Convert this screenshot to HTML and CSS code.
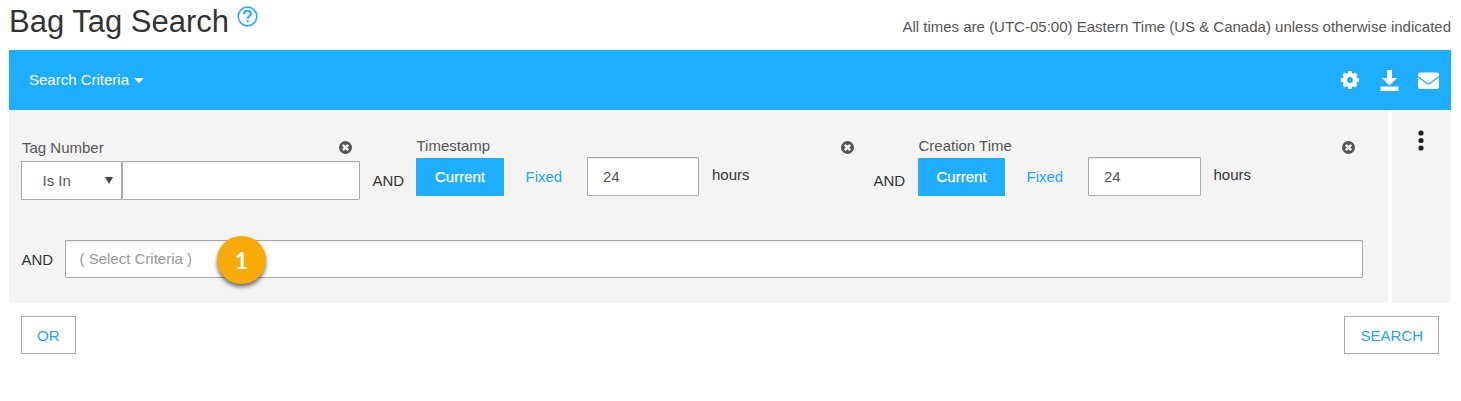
FILE: index.html
```html
<!DOCTYPE html>
<html lang="en">
<head>
<meta charset="utf-8">
<title>Bag Tag Search</title>
<link rel="stylesheet" href="styles.css">
</head>
<body>
<svg class="defs" width="0" height="0">
  <symbol id="remove" viewBox="0 0 13 13">
    <circle cx="6.5" cy="6.5" r="6.500" fill="#555"/>
    <path d="M3.800 3.800 9.200 9.200M9.200 3.800 3.800 9.200" stroke="#f4f4f4" stroke-width="2.500"/>
  </symbol>
</svg>
<header class="header">
  <h1 class="title">Bag Tag Search</h1>
  <svg class="help" width="21" height="21" viewBox="0 0 21 21" fill="none" stroke="#2eaaff" stroke-width="1.700">
    <circle cx="10.500" cy="10.500" r="9.300"/>
    <path d="M7 8.100C7.100 6 8.600 4.900 10.500 4.900c1.900 0 3.500 1.100 3.500 2.800 0 2.400-3.400 2.600-3.400 5.100" stroke-width="2.100"/>
    <path d="M10.600 14.200v2" stroke-width="2.200"/>
  </svg>
  <p class="zone">All times are (UTC-05:00) Eastern Time (US &amp; Canada) unless otherwise indicated</p>
</header>
<main>
  <div class="toolbar">
    <span class="menu">Search Criteria</span>
    <span class="caret"></span>
    <div class="tools">
      <svg width="18" height="18" viewBox="0 0 18 18">
        <g fill="#fff">
          <path id="tooth" d="M7.300 0h3.400l.8 4h-5zM7.300 18h3.400l.8-4h-5z"/>
          <use href="#tooth" transform="rotate(45 9 9)"/>
          <use href="#tooth" transform="rotate(90 9 9)"/>
          <use href="#tooth" transform="rotate(135 9 9)"/>
        </g>
        <circle cx="9" cy="9" r="2.900" fill="#1eadff"/>
        <circle cx="9" cy="9" r="5" fill="none" stroke="#fff" stroke-width="4.200"/>
      </svg>
      <svg class="download" width="19" height="21" viewBox="0 0 19 21" fill="#fff">
        <path d="M7 0h5v8h5l-7.500 7.500L2 8h5zM.5 16.500h18V21H.5z"/>
      </svg>
      <svg class="mail" width="21" height="17" viewBox="0 0 21 17">
        <rect y=".5" width="21" height="16.500" rx="2" fill="#fff"/>
        <path d="M0 4.500 8.500 11q2 1.500 4 0L21 4.500" fill="none" stroke="#1eadff" stroke-width="1.200"/>
      </svg>
    </div>
  </div>
  <div class="panel">
    <section class="criteria">
      <div class="row">
        <div class="group tag">
          <div class="head"><span>Tag Number</span><svg class="x" width="13" height="13"><use href="#remove"/></svg></div>
          <div class="controls">
            <div class="select"><span>Is In</span><span class="arrow"></span></div>
            <div class="box value"></div>
          </div>
        </div>
        <span class="and">AND</span>
        <div class="group time">
          <div class="head"><span>Timestamp</span><svg class="x" width="13" height="13"><use href="#remove"/></svg></div>
          <div class="controls">
            <span class="current">Current</span><span class="fixed">Fixed</span>
            <div class="box amount">24</div><span class="unit">hours</span>
          </div>
        </div>
        <span class="and">AND</span>
        <div class="group time second">
          <div class="head"><span>Creation Time</span><svg class="x" width="13" height="13"><use href="#remove"/></svg></div>
          <div class="controls">
            <span class="current">Current</span><span class="fixed">Fixed</span>
            <div class="box amount">24</div><span class="unit">hours</span>
          </div>
        </div>
      </div>
      <div class="add">
        <span class="word">AND</span>
        <div class="box chooser">( Select Criteria )<span class="badge">1</span></div>
      </div>
    </section>
    <aside class="side">
      <svg width="6" height="21" viewBox="0 0 6 21" fill="#222"><circle cx="3" cy="3" r="2.600"/><circle cx="3" cy="10.500" r="2.600"/><circle cx="3" cy="18" r="2.600"/></svg>
    </aside>
  </div>
  <div class="actions"><span class="button">OR</span><span class="button">SEARCH</span></div>
</main>
</body>
</html>
```

FILE: styles.css
```css
* { box-sizing: border-box; }
body {
  margin: 0;
  padding: 0 10px 0 9px;
  height: 401px;
  overflow: hidden;
  background: #fff;
  color: #333;
  font: 15px/20px "Liberation Sans", Arial, sans-serif;
}
.defs { display: block; width: 0; height: 0; }
.header { display: flex; height: 50px; align-items: flex-start; }
.title { width: 221px; margin: 4px 0 0; font-size: 31px; line-height: 36px; font-weight: 400; white-space: nowrap; }
.help { margin: 6px 0 0 7px; }
.zone { margin: 17px 0 0 auto; color: #555; white-space: nowrap; }
.toolbar { display: flex; align-items: center; height: 60px; padding: 0 12px 0 20px; background: #1eadff; color: #fff; }
.caret { margin-left: 5px; border: 5px solid transparent; border-top-color: #fff; border-bottom: 0; }
.tools { display: flex; align-items: center; margin-left: auto; }
.download { margin-left: 21px; }
.mail { margin-left: 19px; }
.panel { display: flex; gap: 4px; height: 193px; }
.criteria { width: 1379px; padding: 26px 25px 0 12px; background: #f4f4f4; }
.side { width: 59px; padding: 20px 0 0 26px; background: #f4f4f4; }
.row { display: flex; height: 104px; }
.head { display: flex; justify-content: space-between; color: #555; }
.controls { display: flex; }
.box { border: 1px solid #aaa; border-radius: 1px; background: #fff; color: #555; box-shadow: inset 0 1px 1px rgba(0,0,0,.08); }
.tag { width: 339px; }
.tag .head { height: 25px; padding: 2px 8px 0 1px; }
.tag .x { margin-top: 3px; }
.select { display: flex; justify-content: space-between; align-items: center; width: 101px; height: 39px; padding: 0 8px 0 20.5px; border: 1px solid #aaa; background: #fff; color: #555; }
.arrow { border: 4px solid transparent; border-top: 7px solid #444; border-bottom: 0; }
.value { width: 238px; height: 39px; }
.and { width: 56px; padding: 35px 0 0 12.5px; }
.time { width: 445px; }
.time .head { padding-right: 7px; padding-left: .5px; height: 21px; }
.time .x { margin-top: 5px; }
.time.second { width: 445px; margin-left: 1px; }
.second .head { padding-right: 8px; }
.current { width: 88px; height: 38px; margin-top: 1px; border-radius: 1px; background: #1eadff; color: #fff; line-height: 37px; text-align: center; -webkit-text-stroke: .25px #fff; }
.second .current { width: 87px; }
.fixed { width: 83px; padding-left: 21.5px; color: #1ea5fb; line-height: 39px; }
.amount { width: 112px; height: 39px; padding-left: 15px; line-height: 37px; }
.second .amount { width: 113px; }
.unit { padding-left: 13px; line-height: 36px; }
.second .unit { padding-left: 12.5px; }
.add { display: flex; }
.word { width: 44px; padding-left: .5px; line-height: 40px; }
.chooser { position: relative; width: 1298px; height: 38px; padding-left: 13.5px; line-height: 36px; color: #999; }
.badge { position: absolute; left: 151px; top: -5px; width: 49px; height: 48px; border-radius: 50%; background: #f7aa08; box-shadow: 0 3px 4px rgba(0,0,0,.55); color: #fff; font: bold 23px/49px Lato, sans-serif; text-align: center; }
.actions { display: flex; justify-content: space-between; padding: 13px 12px 0; }
.button { height: 38px; padding: 0 15px; border: 1px solid #aaa; color: #1ea5fb; line-height: 37px; }
```
